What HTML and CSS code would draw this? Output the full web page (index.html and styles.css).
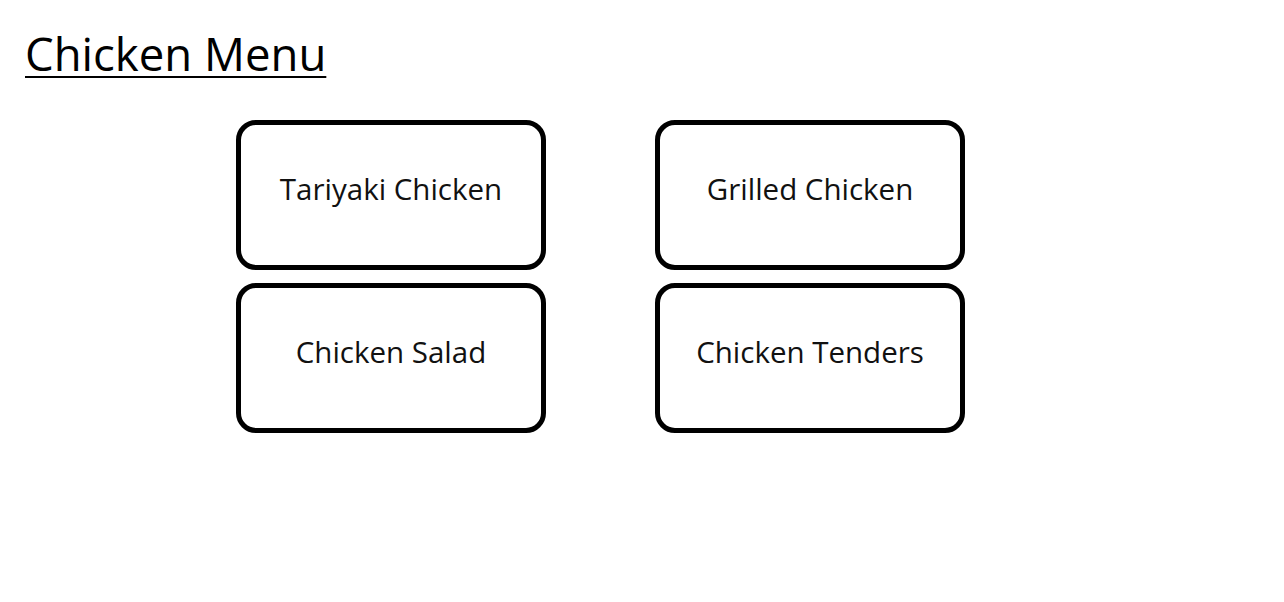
FILE: index.html
```html
<!DOCTYPE html>
<html lang="en">
<head>
  <meta charset="UTF-8" />
  <meta name="viewport" content="width=device-width, initial-scale=1.0"/>
  <title>Chicken Menu</title>
  <link rel="stylesheet" href="styles.css">
</head>
<body>
  <h1 class="menu-title">Chicken Menu</h1>
  <div class="menu-grid">
    <a href="#" class="menu-item">Tariyaki Chicken</a>
    <a href="#" class="menu-item">Grilled Chicken</a>
    <a href="#" class="menu-item">Chicken Salad</a>
    <a href="#" class="menu-item">Chicken Tenders</a>
  </div>
</body>
</html>
```
FILE: styles.css
```css
body {
  margin: 0;
  background: #fff;
  color: #000;
  font-family: 'Open Sans', 'Noto Sans', Arial, sans-serif;
}

.menu-title {
  margin: 0;
  padding: 24px 0 0 25px;
  font-size: 45.5px;
  font-weight: normal;
  line-height: 58px;
  text-decoration: underline;
  text-decoration-thickness: 2px;
  text-underline-offset: 5px;
}

.menu-grid {
  display: grid;
  grid-template-columns: 310px 310px;
  grid-auto-rows: 150px;
  column-gap: 109px;
  row-gap: 13px;
  margin: 38px 0 0 236px;
}

.menu-item {
  display: flex;
  justify-content: center;
  align-items: center;
  padding-bottom: 14px;
  box-sizing: border-box;
  border: 5px solid #000;
  border-radius: 20px;
  color: #111;
  text-decoration: none;
  font-size: 29.5px;
}
```
